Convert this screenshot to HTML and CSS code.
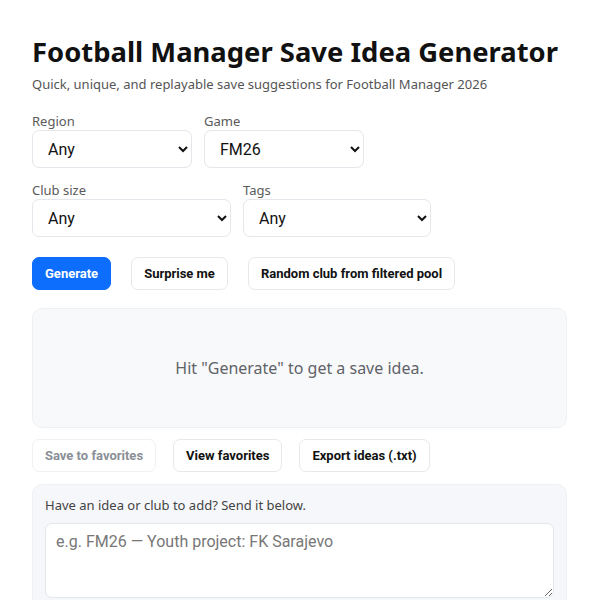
FILE: index.html
```html
<!DOCTYPE html>
<html lang="en">
<head>
<meta charset="utf-8">
<title>Football Manager Save Idea Generator</title>
<link rel="stylesheet" href="styles.css">
</head>
<body>
<main class="page">
  <h1 class="title">Football Manager Save Idea Generator</h1>
  <p class="subtitle">Quick, unique, and replayable save suggestions for Football Manager 2026</p>

  <div class="filters">
    <label class="field">
      <span class="field-label">Region</span>
      <select class="select select-region"><option>Any</option></select>
    </label>
    <label class="field">
      <span class="field-label">Game</span>
      <select class="select select-game"><option>FM26</option></select>
    </label>
  </div>
  <div class="filters">
    <label class="field">
      <span class="field-label">Club size</span>
      <select class="select select-size"><option>Any</option></select>
    </label>
    <label class="field">
      <span class="field-label">Tags</span>
      <select class="select select-tags"><option>Any</option></select>
    </label>
  </div>

  <div class="actions actions-main">
    <button class="btn btn-primary">Generate</button>
    <button class="btn">Surprise me</button>
    <button class="btn">Random club from filtered pool</button>
  </div>

  <section class="result">
    <p class="result-text">Hit "Generate" to get a save idea.</p>
  </section>

  <div class="actions actions-fav">
    <button class="btn" disabled>Save to favorites</button>
    <button class="btn">View favorites</button>
    <button class="btn">Export ideas (.txt)</button>
  </div>

  <section class="feedback">
    <p class="feedback-text">Have an idea or club to add? Send it below.</p>
    <textarea class="feedback-input" placeholder="e.g. FM26 — Youth project: FK Sarajevo"></textarea>
  </section>
</main>
</body>
</html>
```

FILE: styles.css
```css
* { box-sizing: border-box; }

html, body {
  margin: 0;
  background: #ffffff;
}

body {
  font-family: "Noto Sans", "Open Sans", sans-serif;
  color: #111111;
}

.page {
  width: 600px;
  padding: 35px 33px 0 32px;
}

.title {
  margin: 0;
  font-size: 27.4px;
  line-height: 33px;
  font-weight: 700;
  color: #111111;
  white-space: nowrap;
}

.subtitle {
  margin: 6px 0 0;
  font-size: 13px;
  line-height: 20px;
  color: #555555;
}

.filters {
  display: flex;
  gap: 12px;
  margin-top: 18px;
}

.filters + .filters {
  margin-top: 13px;
}

.field {
  display: flex;
  flex-direction: column;
}

.field-label {
  font-size: 13px;
  line-height: 18px;
  color: #5a5a5a;
  margin-bottom: 0;
}

.select {
  height: 38px;
  padding: 0 8px 0 11px;
  font-family: Roboto, "Liberation Sans", sans-serif;
  font-size: 16px;
  color: #111111;
  background: #ffffff;
  border: 1px solid #e3e6ea;
  border-radius: 7px;
}

.select-region { width: 160px; }
.select-game { width: 160px; }
.select-size { width: 199px; }
.select-tags { width: 188px; }

.actions {
  display: flex;
  gap: 20px;
}

.actions-main {
  margin-top: 20px;
  gap: 20px;
}

.actions-fav {
  margin-top: 11px;
  gap: 17px;
}

.btn {
  height: 33px;
  padding: 0 12px;
  font-family: Roboto, "Liberation Sans", sans-serif;
  font-size: 13px;
  font-weight: 700;
  color: #111111;
  background: #ffffff;
  border: 1px solid #e6e8eb;
  border-radius: 7px;
}

.btn-primary {
  background: #0d6efd;
  border-color: #0d6efd;
  color: #ffffff;
}

.btn:disabled {
  color: #8a8f96;
  border-color: #f0f1f3;
}

.result {
  margin-top: 18px;
  height: 120px;
  display: flex;
  align-items: center;
  justify-content: center;
  background: #f8f9fb;
  border: 1px solid #eef0f2;
  border-radius: 10px;
}

.result-text {
  margin: 0;
  font-size: 16px;
  color: #5f6368;
}

.feedback {
  margin-top: 12px;
  padding: 10px 12px 0 12px;
  background: #f5f7fa;
  border: 1px solid #eef0f3;
  border-radius: 10px;
  height: 130px;
}

.feedback-text {
  margin: 0;
  font-size: 13px;
  line-height: 20px;
  color: #444444;
}

.feedback-input {
  display: block;
  width: 100%;
  height: 75px;
  margin-top: 8px;
  padding: 8px 10px;
  font-family: Roboto, "Liberation Sans", sans-serif;
  font-size: 16px;
  color: #111111;
  background: #ffffff;
  border: 1px solid #e3e6ea;
  border-radius: 7px;
  resize: vertical;
}

.feedback-input::placeholder {
  color: #777777;
}
```
